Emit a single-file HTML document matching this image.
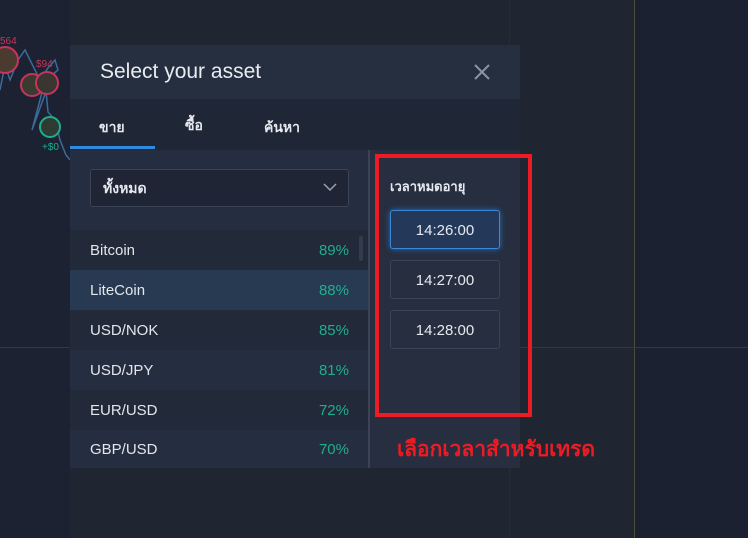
<!DOCTYPE html>
<html><head><meta charset="utf-8"><style>
*{margin:0;padding:0;box-sizing:border-box}
body{width:748px;height:538px;overflow:hidden;background:#1f2531;font-family:"Liberation Sans","Noto Sans CJK SC",sans-serif;position:relative;color:#e6e9ee}
.a{position:absolute}
.row{position:absolute;left:70px;width:298px;height:40px;font-size:15px;line-height:42px;padding-left:20px;color:#e3e6ea}
.row span{position:absolute;right:19px;color:#1fae8c}
.tb{position:absolute;left:390px;width:110px;height:39px;border:1px solid #3a4456;border-radius:3px;text-align:center;line-height:39px;font-size:15px;color:#e6e9ee}
</style></head><body>
<div class="a" style="left:0;top:0;width:70px;height:538px;background:#1c2231"></div>
<div class="a" style="left:634px;top:0;width:114px;height:538px;background:#1b2130"></div>
<div class="a" style="left:634px;top:0;width:1px;height:538px;background:#4a4c3c"></div>
<div class="a" style="left:509px;top:0;width:1px;height:538px;background:#262d3a"></div>
<div class="a" style="left:0;top:347px;width:748px;height:1px;background:#2c3a4e"></div>
<svg class="a" style="left:0;top:20px" width="70" height="140"><polyline points="0,70 5,45 10,60 18,40 25,30 30,40 40,60 48,48 55,40 58,50 52,55 32,110 40,80 45,60 48,92 55,100 60,120 66,135 70,140" fill="none" stroke="#3c6a9a" stroke-width="1.5"/>
<circle cx="5" cy="40" r="13" fill="#4a3a30" stroke="#c8345a" stroke-width="2"/><circle cx="32" cy="65" r="11" fill="#3a3a30" stroke="#c8345a" stroke-width="2"/><circle cx="47" cy="63" r="11" fill="#3a3530" stroke="#c8345a" stroke-width="2"/><circle cx="50" cy="107" r="10" fill="#2e3a32" stroke="#1fae8c" stroke-width="2"/>
<text x="0" y="24" fill="#c8345a" font-size="10" font-family="Liberation Sans">564</text><text x="36" y="47" fill="#c8345a" font-size="10" font-family="Liberation Sans">$94</text><text x="42" y="130" fill="#1fae8c" font-size="10" font-family="Liberation Sans">+$0</text></svg>
<div class="a" style="left:70px;top:45px;width:450px;height:54px;background:#262f40"></div>
<div class="a" style="left:100px;top:60px;font-size:21px;color:#e9ecf0">Select your asset</div>
<svg class="a" style="left:473px;top:63px" width="18" height="18"><path d="M2 2L16 16M16 2L2 16" stroke="#8a93a3" stroke-width="2"/></svg>
<div class="a" style="left:70px;top:99px;width:450px;height:51px;background:#1f2635"></div>
<div class="a" style="left:99px;top:117px;font-size:14px;font-weight:bold;color:#e6e9ee">ขาย</div>
<div class="a" style="left:185px;top:115px;font-size:14px;font-weight:bold;color:#e6e9ee">ซื้อ</div>
<div class="a" style="left:264px;top:117px;font-size:14px;font-weight:bold;color:#e6e9ee">ค้นหา</div>
<div class="a" style="left:70px;top:146px;width:85px;height:3px;background:#2f8ae0"></div>
<div class="a" style="left:70px;top:150px;width:300px;height:80px;background:#252e40"></div>
<div class="a" style="left:90px;top:169px;width:259px;height:38px;border:1px solid #3a4456;border-radius:3px;background:#1f2535;font-size:14px;font-weight:bold;line-height:36px;padding-left:12px">ทั้งหมด</div>
<svg class="a" style="left:323px;top:183px" width="14" height="9"><path d="M1 1L7 7L13 1" fill="none" stroke="#9aa2b0" stroke-width="1.5"/></svg>
<div class="row" style="top:230px;background:#222a3a">Bitcoin<span>89%</span></div>
<div class="row" style="top:270px;background:#283a52">LiteCoin<span>88%</span></div>
<div class="row" style="top:310px;background:#222a3a">USD/NOK<span>85%</span></div>
<div class="row" style="top:350px;background:#252e40">USD/JPY<span>81%</span></div>
<div class="row" style="top:390px;background:#222a3a">EUR/USD<span>72%</span></div>
<div class="row" style="top:430px;background:#252e40;height:38px;line-height:40px">GBP/USD<span>70%</span></div>
<div class="a" style="left:359px;top:236px;width:4px;height:25px;background:#333c4c;border-radius:2px"></div>
<div class="a" style="left:368px;top:150px;width:2px;height:318px;background:#3a4456"></div>
<div class="a" style="left:370px;top:150px;width:150px;height:318px;background:#262e40"></div>
<div class="a" style="left:390px;top:176px;font-size:13px;font-weight:bold;color:#e6e9ee">เวลาหมดอายุ</div>
<div class="tb" style="top:210px;background:#24395a;border-color:#3a88d8;box-shadow:0 0 6px #2f6eb8">14:26:00</div>
<div class="tb" style="top:260px">14:27:00</div>
<div class="tb" style="top:310px">14:28:00</div>
<div class="a" style="left:375px;top:154px;width:157px;height:263px;border:4px solid #ed1c24"></div>
<div class="a" style="left:397px;top:433px;font-size:21px;font-weight:bold;color:#ed1c24">เลือกเวลาสำหรับเทรด</div>
</body></html>
